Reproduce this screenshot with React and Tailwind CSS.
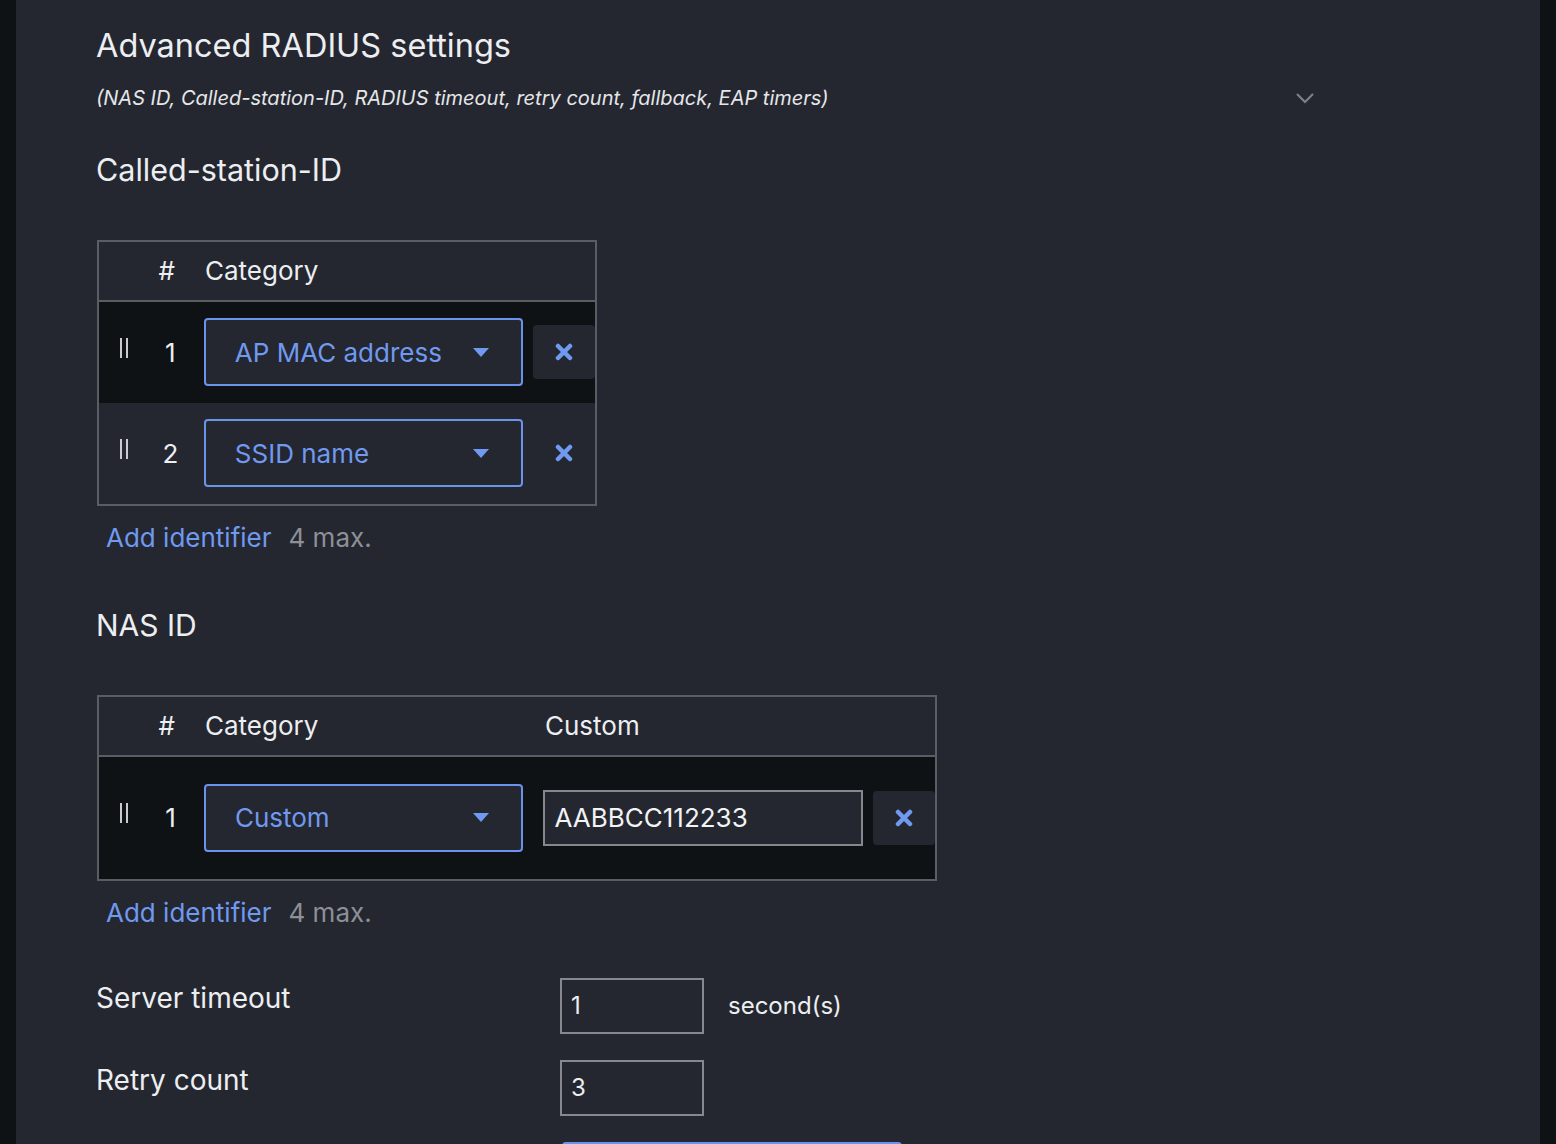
import React from "react";

const BLUE = "text-[#7099f0]";

function DragHandle() {
  return (
    <span className="flex gap-[4px] h-[20px] mt-[-9px]">
      <span className="w-[2px] h-full bg-[#c9cbd0]" />
      <span className="w-[2px] h-full bg-[#c9cbd0]" />
    </span>
  );
}

function Caret() {
  return (
    <svg width="16" height="9" viewBox="0 0 16 9" className="shrink-0">
      <path d="M0 0h16L8 9z" fill="#7099f0" />
    </svg>
  );
}

function XIcon() {
  return (
    <svg width="18" height="18" viewBox="0 0 18 18">
      <path d="M3 3l12 12M15 3L3 15" stroke="#7099f0" strokeWidth="4.5" strokeLinecap="round" />
    </svg>
  );
}

function Select({ value }) {
  return (
    <div className="w-[320px] h-[68px] border-2 border-[#6b93ec] rounded-[4px] bg-[#24272f] flex items-center justify-between pl-[29px] pr-[32px]">
      <span className={`text-[26px] ${BLUE}`}>{value}</span>
      <Caret />
    </div>
  );
}

function RemoveBtn({ filled }) {
  return (
    <div className={`w-[62px] h-[54px] rounded-[4px] flex items-center justify-center ${filled ? "bg-[#24272f]" : ""}`}>
      <XIcon />
    </div>
  );
}

function AddRow() {
  return (
    <div className="pl-[9px] mt-[12px] flex items-center gap-[17px] text-[26px]">
      <span className={BLUE}>Add identifier</span>
      <span className="text-[#8d9096]">4 max.</span>
    </div>
  );
}

function HeaderRow({ custom }) {
  return (
    <div className="h-[60px] flex items-center border-b-2 border-[#5a5d63] text-[26px] text-[#eceef1]">
      <span className="w-[76px] text-right">#</span>
      <span className="ml-[30px] w-[340px]">Category</span>
      {custom && <span>Custom</span>}
    </div>
  );
}

function DataRow({ n, value, h, filled, children }) {
  return (
    <div className={`${h} flex items-center ${filled ? "bg-[#0f1215]" : ""}`}>
      <span className="w-[54px] flex justify-end pr-[25px]"><DragHandle /></span>
      <span className="w-[51px] pr-[16px] text-center text-[26px]">{n}</span>
      <Select value={value} />
      {children}
    </div>
  );
}

export default function App() {
  return (
    <div className="min-h-screen bg-[#0f1215] px-[16px] font-['Inter',sans-serif]">
      <div className="bg-[#24272f] min-h-[1144px] pl-[81px] pr-[80px] pt-[24px] text-[#eceef1]">
        <h1 className="text-[32.5px] leading-[44px] -ml-[1px]">Advanced RADIUS settings</h1>
        <div className="flex items-center justify-between w-[1219px] mt-[15px] -ml-[1px]">
          <p className="italic text-[20px] text-[#e4e6ea]">
            (NAS ID, Called-station-ID, RADIUS timeout, retry count, fallback, EAP timers)
          </p>
          <svg width="20" height="12" viewBox="0 0 20 12">
            <path d="M2 2l8 8 8-8" stroke="#7c7f86" strokeWidth="2.2" fill="none" />
          </svg>
        </div>

        <h2 className="text-[30.5px] mt-[34px] -ml-[1px]">Called-station-ID</h2>

        <div className="w-[500px] border-2 border-[#5a5d63] mt-[47px]">
          <HeaderRow />
          <DataRow n="1" value="AP MAC address" h="h-[101px]" filled>
            <span className="ml-[10px]"><RemoveBtn filled /></span>
          </DataRow>
          <DataRow n="2" value="SSID name" h="h-[101px]">
            <span className="ml-[10px]"><RemoveBtn /></span>
          </DataRow>
        </div>
        <AddRow />

        <h2 className="text-[30px] mt-[46px] -ml-[1px]">NAS ID</h2>

        <div className="w-[840px] border-2 border-[#5a5d63] mt-[47px]">
          <HeaderRow custom />
          <DataRow n="1" value="Custom" h="h-[122px]" filled>
            <div className="ml-[20px] w-[320px] h-[56px] border-2 border-[#85888e] bg-[#24272f] flex items-center pl-[9px] text-[26px] text-[#f2f3f5]">
              AABBCC112233
            </div>
            <span className="ml-[10px]"><RemoveBtn filled /></span>
          </DataRow>
        </div>
        <AddRow />

        <div className="mt-[46px] flex flex-col gap-[26px] -ml-[1px]">
          <div className="flex items-start">
            <span className="w-[464px] text-[28px] leading-[40px]">Server timeout</span>
            <div className="w-[144px] h-[56px] border-2 border-[#85888e] flex items-center pl-[9px] text-[24px]">1</div>
            <span className="ml-[24px] self-center text-[24px]">second(s)</span>
          </div>
          <div className="flex items-start">
            <span className="w-[464px] text-[28px] leading-[40px]">Retry count</span>
            <div className="w-[144px] h-[56px] border-2 border-[#85888e] flex items-center pl-[9px] text-[24px]">3</div>
          </div>
          <div className="flex">
            <span className="w-[466px]" />
            <div className="w-[340px] h-[56px] border-2 border-[#6b93ec] rounded-[4px]" />
          </div>
        </div>
      </div>
    </div>
  );
}
